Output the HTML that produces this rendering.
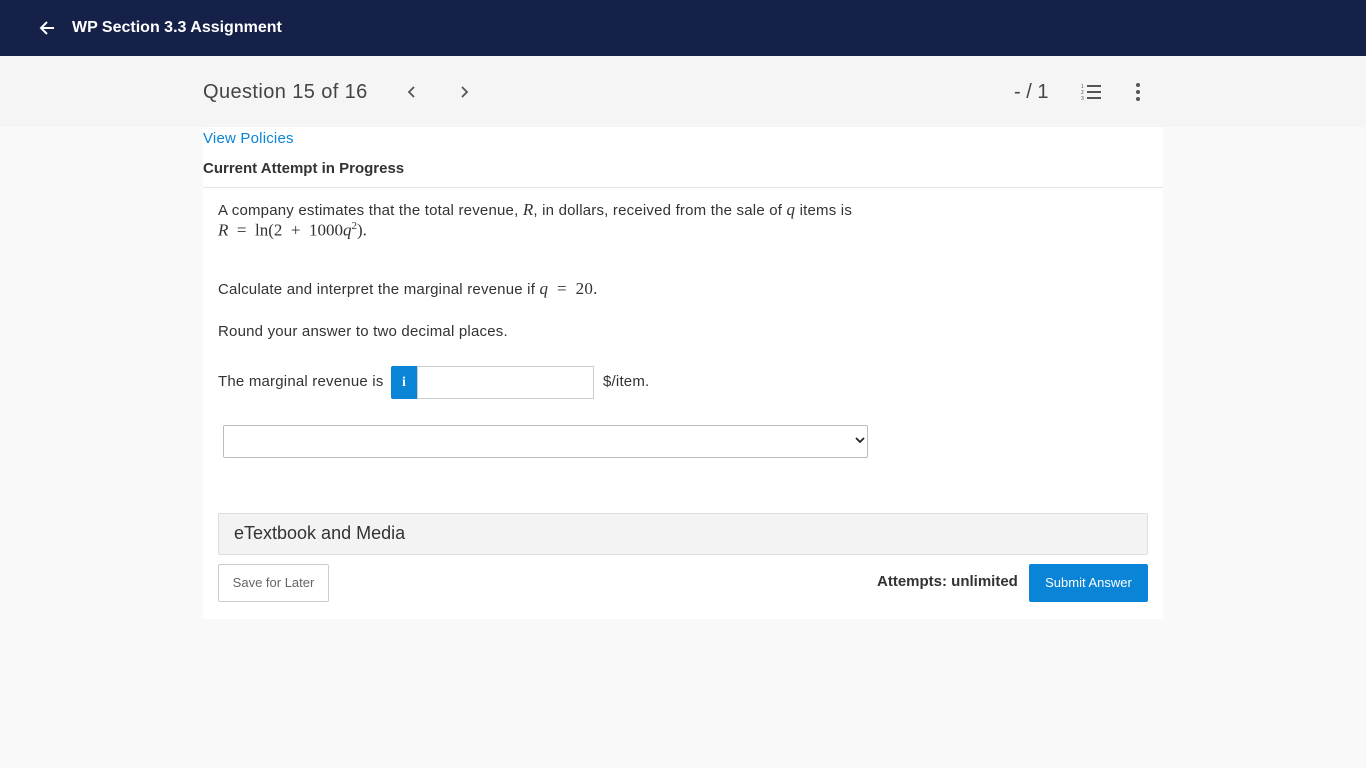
<!DOCTYPE html>
<html><head><style>
body{margin:0;width:1366px;height:768px;background:#f9f9f9;font-family:"Liberation Sans",sans-serif;color:#333;position:relative;overflow:hidden}
.top{position:absolute;left:0;top:0;width:1366px;height:56px;background:#16214a;color:#fff}
.a{position:absolute}
.card{position:absolute;left:203px;top:127px;width:960px;height:492px;background:#fff}
.m{font-family:"Liberation Serif",serif;font-size:17px}
.t{font-size:15px;letter-spacing:0.2px}
</style></head><body>
<div class="top">
<svg class="a" style="left:38px;top:19px" width="18" height="18" viewBox="0 0 18 18"><path d="M16 9H3M9 3L3 9l6 6" stroke="#fff" stroke-width="2" fill="none"/></svg>
<div class="a" style="left:72px;top:19px;font-size:16px;font-weight:bold">WP Section 3.3 Assignment</div>
</div>
<div class="a" style="left:0;top:56px;width:1366px;height:71px;background:#f5f5f5"></div>
<div class="a" style="left:203px;top:81px;font-size:20px;color:#444;letter-spacing:0.4px">Question 15 of 16</div>
<svg class="a" style="left:405px;top:84px" width="14" height="16"><path d="M9 3L4 8l5 5" stroke="#555" stroke-width="1.8" fill="none"/></svg>
<svg class="a" style="left:457px;top:84px" width="14" height="16"><path d="M5 3l5 5-5 5" stroke="#555" stroke-width="1.8" fill="none"/></svg>
<div class="a" style="left:1014px;top:81px;font-size:20px;color:#444">- / 1</div>
<svg class="a" style="left:1080px;top:83px" width="22" height="18"><g stroke="#555" stroke-width="2"><path d="M7 3h14M7 9h14M7 15h14"/></g><g fill="#555" font-size="5"><text x="1" y="5">1</text><text x="1" y="11">2</text><text x="1" y="17">3</text></g></svg>
<svg class="a" style="left:1134px;top:82px" width="8" height="20"><circle cx="4" cy="3" r="2" fill="#555"/><circle cx="4" cy="10" r="2" fill="#555"/><circle cx="4" cy="17" r="2" fill="#555"/></svg>
<div class="card"></div>
<div class="a t" style="left:203px;top:130px;color:#0a84d6">View Policies</div>
<div class="a" style="left:203px;top:160px;font-size:15px;font-weight:bold">Current Attempt in Progress</div>
<div class="a" style="left:203px;top:187px;width:960px;border-top:1px solid #e5e5e5"></div>
<div class="a t" style="left:218px;top:200px">A company estimates that the total revenue, <i class="m">R</i>, in dollars, received from the sale of <i class="m">q</i> items is</div>
<div class="a m" style="left:218px;top:220px"><i>R</i> &nbsp;= &nbsp;ln(2 &nbsp;+ &nbsp;1000<i>q</i><sup style="font-size:11px">2</sup>).</div>
<div class="a t" style="left:218px;top:279px">Calculate and interpret the marginal revenue if <i class="m">q</i> <span class="m">&nbsp;= &nbsp;20.</span></div>
<div class="a t" style="left:218px;top:323px">Round your answer to two decimal places.</div>
<div class="a t" style="left:218px;top:373px">The marginal revenue is</div>
<div class="a" style="left:391px;top:366px;width:26px;height:33px;background:#0a84d6;color:#fff;font-weight:bold;font-family:'Liberation Serif',serif;text-align:center;line-height:33px;font-size:14px;border-radius:2px 0 0 2px">i</div>
<div class="a" style="left:417px;top:366px;width:175px;height:31px;border:1px solid #ccc"></div>
<div class="a t" style="left:603px;top:373px">$/item.</div>
<div class="a" style="left:223px;top:425px;width:643px;height:31px;border:1px solid #bbb;border-radius:2px"></div>
<svg class="a" style="left:855px;top:436px" width="10" height="8"><path d="M1 2l4 4 4-4" stroke="#222" stroke-width="1.8" fill="none"/></svg>
<div class="a" style="left:218px;top:513px;width:928px;height:40px;background:#f3f3f3;border:1px solid #ddd;border-radius:2px"></div>
<div class="a" style="left:234px;top:523px;font-size:18px;color:#333">eTextbook and Media</div>
<div class="a" style="left:218px;top:564px;width:109px;height:36px;border:1px solid #ccc;border-radius:2px;font-size:13px;color:#666;text-align:center;line-height:36px">Save for Later</div>
<div class="a" style="left:877px;top:573px;font-size:15px;font-weight:bold">Attempts: unlimited</div>
<div class="a" style="left:1029px;top:564px;width:119px;height:38px;background:#0a84d6;border-radius:2px;color:#fff;font-size:13px;text-align:center;line-height:38px">Submit Answer</div>
</body></html>
